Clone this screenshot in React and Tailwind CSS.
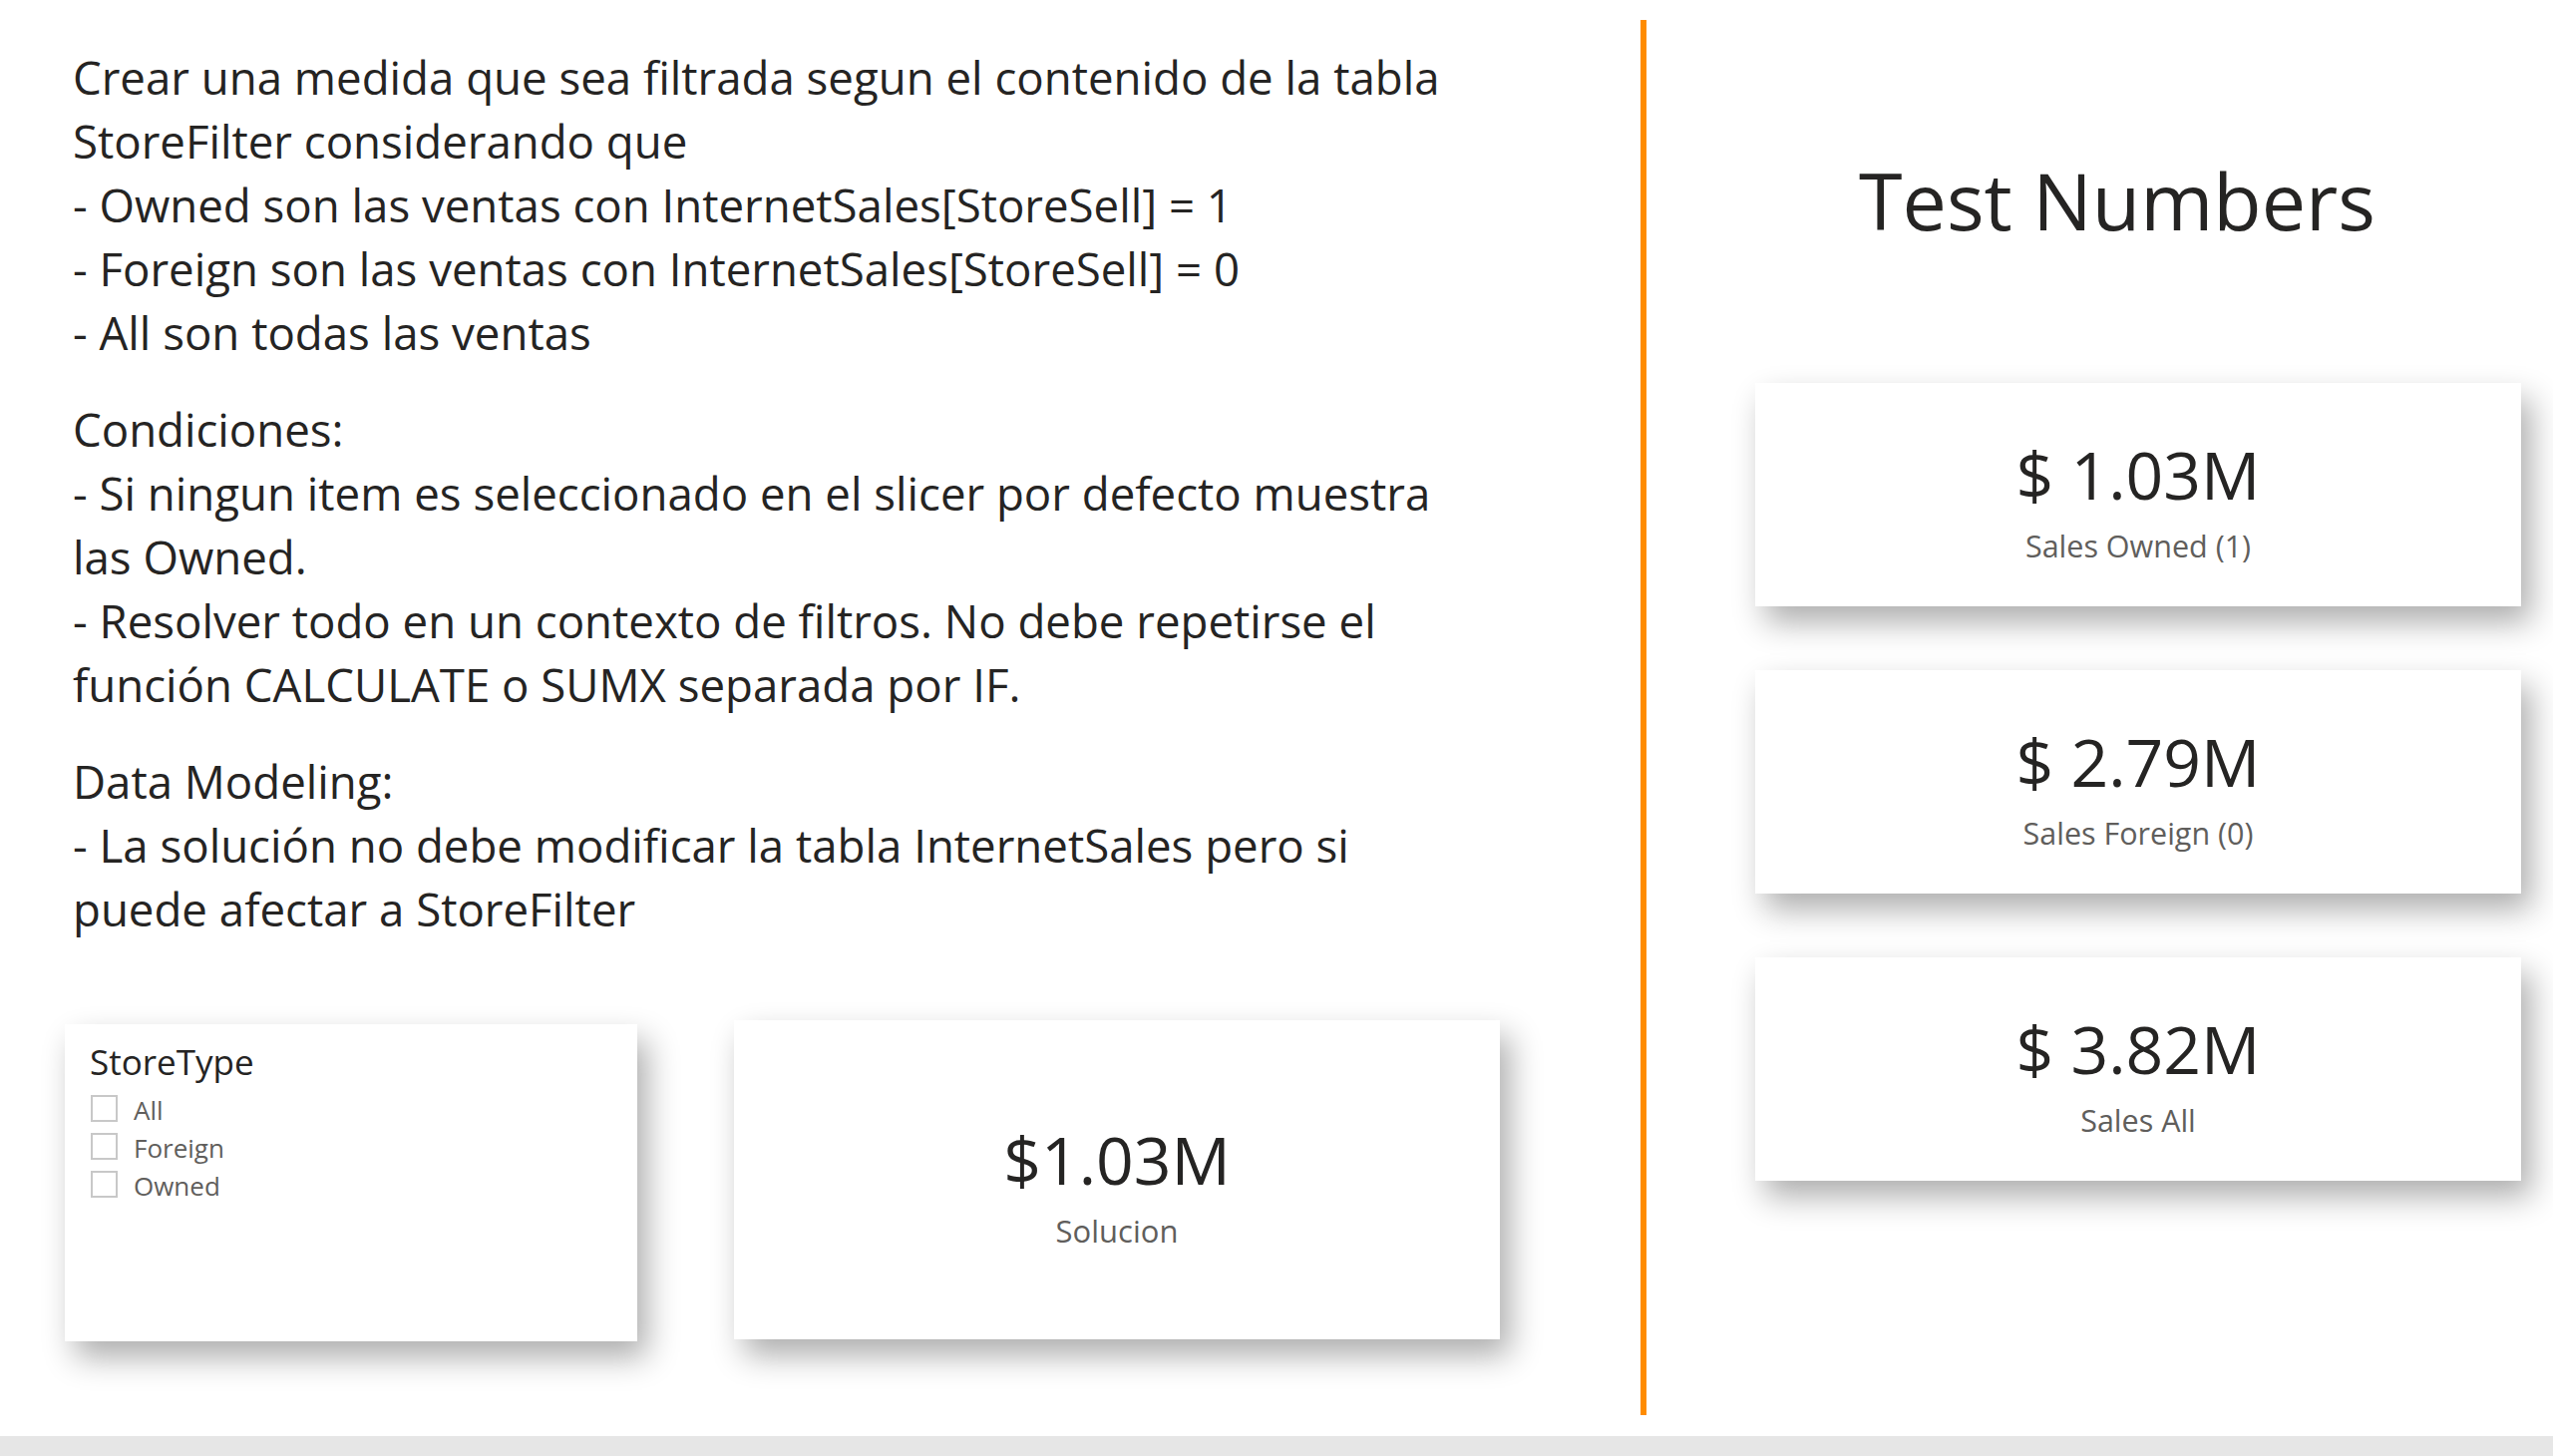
import React from 'react';

// Power BI style report page: instructions + slicer on the left, test KPI cards on the right
const parrafos = [
  [
    'Crear una medida que sea filtrada segun el contenido de la tabla',
    'StoreFilter considerando que',
    '- Owned son las ventas con InternetSales[StoreSell] = 1',
    '- Foreign son las ventas con InternetSales[StoreSell] = 0',
    '- All son todas las ventas',
  ],
  [
    'Condiciones:',
    '- Si ningun item es seleccionado en el slicer por defecto muestra',
    'las Owned.',
    '- Resolver todo en un contexto de filtros. No debe repetirse el',
    'función CALCULATE o SUMX separada por IF.',
  ],
  [
    'Data Modeling:',
    '- La solución no debe modificar la tabla InternetSales pero si',
    'puede afectar a StoreFilter',
  ],
];

const tarjetas = [
  { valor: '$ 1.03M', etiqueta: 'Sales Owned (1)' },
  { valor: '$ 2.79M', etiqueta: 'Sales Foreign (0)' },
  { valor: '$ 3.82M', etiqueta: 'Sales All' },
];

const opciones = ['All', 'Foreign', 'Owned'];

const sombra = 'shadow-[10px_16px_30px_rgba(0,0,0,0.32)]';

export default function App() {
  return (
    <div
      className="w-[2560px] h-[1460px] bg-white flex flex-col text-[#252423] overflow-hidden"
      style={{ fontFamily: '"Open Sans", "Noto Sans", sans-serif' }}
    >
      <div className="flex h-[1440px]">
        {/* Columna izquierda */}
        <div className="w-[1645px] flex flex-col pl-[65px]">
          <div className="pl-[8px] pt-[45px] flex flex-col gap-[33px] text-[45.6px] leading-[64px]">
            {parrafos.map((lineas, i) => (
              <div key={i}>
                {lineas.map((l, j) => (
                  <div key={j} className="whitespace-nowrap">{l}</div>
                ))}
              </div>
            ))}
          </div>

          <div className="flex items-start mt-[80px]">
            {/* Slicer */}
            <div className={`w-[574px] h-[318px] mt-[4px] bg-white ${sombra} pl-[25px] pt-[20px]`}>
              <div className="text-[35px] leading-none whitespace-nowrap">StoreType</div>
              <div className="mt-[10px] flex flex-col">
                {opciones.map(o => (
                  <div key={o} className="h-[38px] flex items-center pl-[1px]">
                    <div className="w-[27px] h-[27px] border-2 border-[#c8c8c8] bg-white" />
                    <span className="ml-[16px] mt-[3px] text-[26px] leading-none text-[#605e5c]">{o}</span>
                  </div>
                ))}
              </div>
            </div>

            {/* Tarjeta solución */}
            <div className={`ml-[97px] w-[768px] h-[320px] bg-white ${sombra} flex flex-col items-center pt-[106px]`}>
              <div className="text-[66px] leading-none whitespace-nowrap">$1.03M</div>
              <div className="mt-[24px] text-[31px] leading-none text-[#605e5c]">Solucion</div>
            </div>
          </div>
        </div>

        {/* Columna derecha */}
        <div className="mt-[20px] h-[1399px] border-l-[6px] border-[#ff8c00] flex-1 flex flex-col">
          <div className="ml-[88px] w-[768px] mt-[141px] text-center text-[79px] leading-none whitespace-nowrap">
            Test Numbers
          </div>
          <div className="ml-[109px] w-[768px] mt-[144px] flex flex-col gap-[64px]">
            {tarjetas.map(t => (
              <div key={t.etiqueta} className={`h-[224px] bg-white ${sombra} flex flex-col items-center pt-[58px]`}>
                <div className="text-[66px] leading-none whitespace-nowrap">{t.valor}</div>
                <div className="mt-[24px] text-[30.5px] leading-none text-[#605e5c] whitespace-nowrap">{t.etiqueta}</div>
              </div>
            ))}
          </div>
        </div>
      </div>
      <div className="h-[20px] bg-[#e6e6e6]" />
    </div>
  );
}
